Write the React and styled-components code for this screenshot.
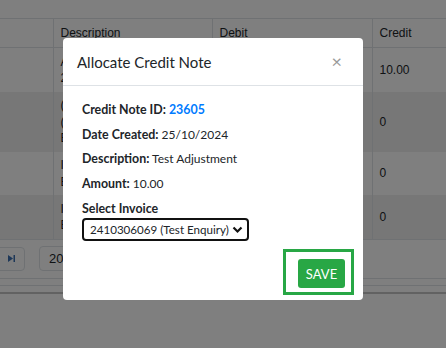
import React from "react";
import styled, { createGlobalStyle } from "styled-components";

const GlobalStyle = createGlobalStyle`
  html, body {
    margin: 0;
    padding: 0;
    background: #fff;
  }
  body {
    font-family: "Liberation Sans", Arial, sans-serif;
    color: #212529;
    overflow: hidden;
  }
`;

const Page = styled.div`
  width: 446px;
  height: 348px;
  padding-top: 18px;
  box-sizing: border-box;
`;

const Table = styled.table`
  width: 100%;
  border-collapse: collapse;
  table-layout: fixed;
  font-size: 12px;
  border-top: 1px solid #dee2e6;
  border-bottom: 1px solid #dee2e6;
`;

const Th = styled.th`
  text-align: left;
  font-weight: normal;
  height: 28px;
  padding: 0 7px;
  border-right: 1px solid #dee2e6;
  border-bottom: 1px solid #dee2e6;
  white-space: nowrap;
  &:last-child { border-right: none; }
`;

const Tr = styled.tr`
  background: ${p => (p.$striped ? "#efefef" : "#fff")};
`;

const Td = styled.td`
  padding: 5.5px 7px 5px;
  line-height: 16.5px;
  vertical-align: middle;
  border-right: 1px solid #dee2e6;
  white-space: nowrap;
  overflow: hidden;
  &:last-child { border-right: none; }
`;

const Pager = styled.div`
  display: flex;
  align-items: center;
  gap: 14px;
  height: 38px;
  margin-left: -20px;
  border-bottom: 1px solid #dee2e6;
`;

const PageBtn = styled.div`
  width: 45px;
  height: 24px;
  border: 1px solid #dee2e6;
  border-radius: 4px;
  display: flex;
  align-items: center;
  justify-content: flex-end;
  padding-right: 9px;
  box-sizing: border-box;
`;

const SizeBox = styled.div`
  width: 60px;
  height: 25px;
  border: 1px solid #dee2e6;
  border-radius: 4px;
  display: flex;
  align-items: center;
  padding-left: 9px;
  box-sizing: border-box;
  font-size: 13px;
`;

const Rule = styled.div`
  height: 6px;
  border-bottom: ${p => (p.$strong ? "2px solid #c4c4c4" : "1px solid #dee2e6")};
`;

const Overlay = styled.div`
  position: fixed;
  inset: 0;
  background: rgba(0, 0, 0, 0.5);
  padding: 38px 0 0 63px;
`;

const Modal = styled.div`
  width: 300px;
  height: 262px;
  background: #fff;
  border-radius: 4px;
  box-sizing: border-box;
  display: flex;
  flex-direction: column;
  font-family: Lato, "Open Sans", sans-serif;
`;

const Header = styled.div`
  height: 48px;
  flex-shrink: 0;
  display: flex;
  align-items: center;
  justify-content: space-between;
  padding: 0 21px 0 14px;
  border-bottom: 1px solid #dee2e6;
  box-sizing: border-box;
`;

const Title = styled.h5`
  margin: 0;
  font-size: 15px;
  font-weight: 400;
  color: #212529;
`;

const Close = styled.span`
  color: #9a9a9a;
  font-size: 18px;
  line-height: 1;
  margin-top: -2px;
`;

const Body = styled.div`
  padding: 14px 19px 0;
  font-size: 12px;
`;

const Field = styled.p`
  margin: 0 0 5px;
  line-height: 19.5px;
  color: #212529;
  b { font-weight: 700; font-size: 12.4px; }
`;

const Link = styled.span`
  color: #007bff;
  font-weight: 700;
  font-size: 12.4px;
`;

const Label = styled.div`
  margin-top: 7px;
  line-height: 18px;
  font-weight: 700;
  font-size: 12.4px;
`;

const Select = styled.div`
  width: 167px;
  height: 23px;
  border: 2px solid #111;
  border-radius: 4px;
  box-sizing: border-box;
  display: flex;
  align-items: center;
  justify-content: space-between;
  padding: 0 4px 0 6px;
  font-size: 11.6px;
  white-space: nowrap;
  svg { flex-shrink: 0; }
`;

const Actions = styled.div`
  display: flex;
  justify-content: flex-end;
  padding: 8px 9px 5px;
`;

const Highlight = styled.div`
  border: 3px solid #28a745;
  padding: 7px 6px 4px 12px;
`;

const SaveButton = styled.button`
  width: 47px;
  height: 29px;
  border: none;
  border-radius: 3px;
  background: #28a745;
  color: #fff;
  font-family: Lato, "Open Sans", sans-serif;
  font-size: 13px;
  padding: 0;
`;

const rows = [
  { lines: ["A", "2"], credit: "10.00" },
  { lines: ["(", "(", "E"], credit: "0", striped: true },
  { lines: ["I", "E"], credit: "0" },
  { lines: ["I", "E"], credit: "0", striped: true },
];

export default function App() {
  return (
    <>
      <GlobalStyle />
      <Page>
        <Table>
          <colgroup>
            <col style={{ width: 53 }} />
            <col style={{ width: 159 }} />
            <col style={{ width: 160 }} />
            <col />
          </colgroup>
          <thead>
            <tr>
              <Th></Th>
              <Th>Description</Th>
              <Th>Debit</Th>
              <Th>Credit</Th>
            </tr>
          </thead>
          <tbody>
            {rows.map((r, i) => (
              <Tr key={i} $striped={r.striped}>
                <Td></Td>
                <Td>
                  {r.lines.map((l, j) => (
                    <div key={j}>{l}</div>
                  ))}
                </Td>
                <Td></Td>
                <Td>{r.credit}</Td>
              </Tr>
            ))}
          </tbody>
        </Table>
        <Pager>
          <PageBtn>
            <svg width="7" height="7" viewBox="0 0 7 7">
              <path d="M0 0 L5 3.5 L0 7 Z" fill="#3a6fb0" />
              <rect x="5.5" y="0" width="1.5" height="7" fill="#3a6fb0" />
            </svg>
          </PageBtn>
          <SizeBox>20</SizeBox>
        </Pager>
        <Rule />
        <Rule $strong />
      </Page>
      <Overlay>
        <Modal>
          <Header>
            <Title>Allocate Credit Note</Title>
            <Close>×</Close>
          </Header>
          <Body>
            <Field>
              <b>Credit Note ID:</b> <Link>23605</Link>
            </Field>
            <Field>
              <b>Date Created:</b> 25/10/2024
            </Field>
            <Field>
              <b>Description:</b> Test Adjustment
            </Field>
            <Field>
              <b>Amount:</b> 10.00
            </Field>
            <Label>Select Invoice</Label>
            <Select>
              <span>2410306069 (Test Enquiry)</span>
              <svg width="11" height="8" viewBox="0 0 11 8">
                <path d="M1.5 1.5 L5.5 5.5 L9.5 1.5" fill="none" stroke="#111" strokeWidth="2.2" />
              </svg>
            </Select>
          </Body>
          <Actions>
            <Highlight>
              <SaveButton>SAVE</SaveButton>
            </Highlight>
          </Actions>
        </Modal>
      </Overlay>
    </>
  );
}
